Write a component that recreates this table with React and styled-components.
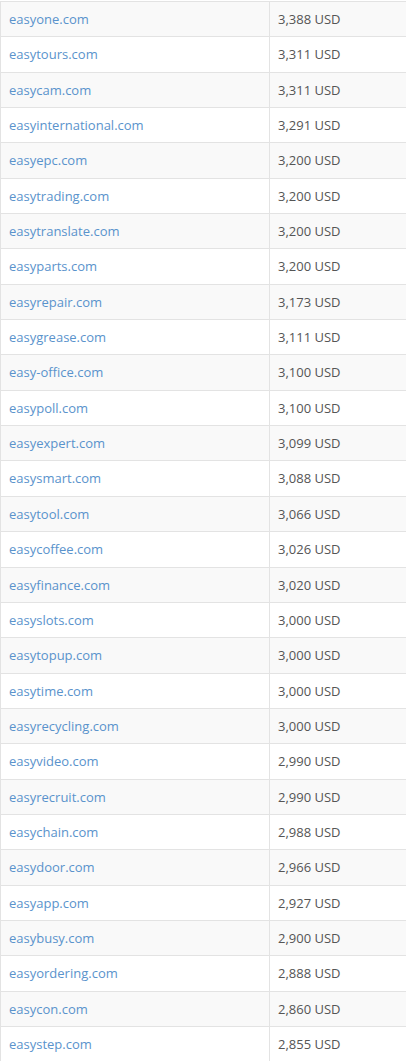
import React from "react";
import styled, { createGlobalStyle } from "styled-components";

const GlobalStyle = createGlobalStyle`
  html, body {
    margin: 0;
    padding: 0;
    background: #fff;
  }
  body {
    font-family: "Open Sans", "Liberation Sans", sans-serif;
    overflow: hidden;
  }
`;

const rows = [
  ["easyone.com", "3,388 USD"],
  ["easytours.com", "3,311 USD"],
  ["easycam.com", "3,311 USD"],
  ["easyinternational.com", "3,291 USD"],
  ["easyepc.com", "3,200 USD"],
  ["easytrading.com", "3,200 USD"],
  ["easytranslate.com", "3,200 USD"],
  ["easyparts.com", "3,200 USD"],
  ["easyrepair.com", "3,173 USD"],
  ["easygrease.com", "3,111 USD"],
  ["easy-office.com", "3,100 USD"],
  ["easypoll.com", "3,100 USD"],
  ["easyexpert.com", "3,099 USD"],
  ["easysmart.com", "3,088 USD"],
  ["easytool.com", "3,066 USD"],
  ["easycoffee.com", "3,026 USD"],
  ["easyfinance.com", "3,020 USD"],
  ["easyslots.com", "3,000 USD"],
  ["easytopup.com", "3,000 USD"],
  ["easytime.com", "3,000 USD"],
  ["easyrecycling.com", "3,000 USD"],
  ["easyvideo.com", "2,990 USD"],
  ["easyrecruit.com", "2,990 USD"],
  ["easychain.com", "2,988 USD"],
  ["easydoor.com", "2,966 USD"],
  ["easyapp.com", "2,927 USD"],
  ["easybusy.com", "2,900 USD"],
  ["easyordering.com", "2,888 USD"],
  ["easycon.com", "2,860 USD"],
  ["easystep.com", "2,855 USD"],
];

const Wrap = styled.div`
  padding-top: 1px;
`;

const Table = styled.table`
  width: 420px;
  border-collapse: collapse;
  font-size: 13px;
`;

const Row = styled.tr`
  background: ${(p) => (p.$striped ? "#f9f9f9" : "#fff")};
`;

const Cell = styled.td`
  height: 18.34px;
  line-height: 18.34px;
  padding: 8px;
  border: 1px solid #e3e3e3;
  color: #555;
  white-space: nowrap;
  &:first-child {
    width: 252px;
  }
`;

const DomainLink = styled.a`
  color: #5a93cc;
  text-decoration: none;
`;

export default function App() {
  return (
    <Wrap>
      <GlobalStyle />
      <Table>
        <tbody>
          {rows.map(([domain, price], i) => (
            <Row key={domain} $striped={i % 2 === 0}>
              <Cell>
                <DomainLink href="#">{domain}</DomainLink>
              </Cell>
              <Cell>{price}</Cell>
            </Row>
          ))}
        </tbody>
      </Table>
    </Wrap>
  );
}
